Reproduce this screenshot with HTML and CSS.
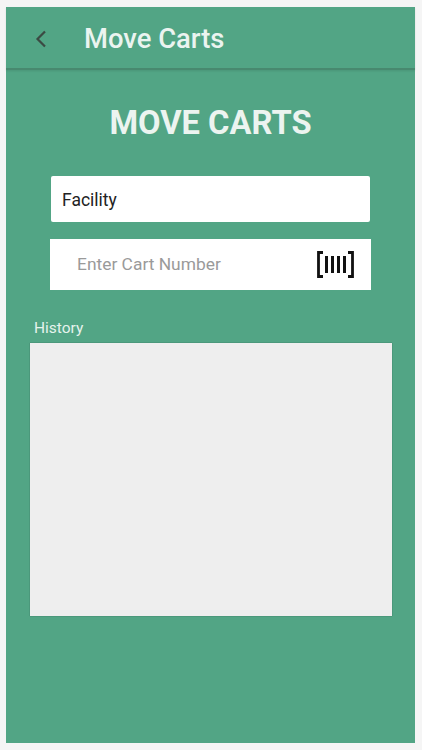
FILE: index.html
```html
<!DOCTYPE html>
<html lang="en">
<head>
    <meta charset="UTF-8">
    <meta name="viewport" content="width=device-width, initial-scale=1.0">
    <title>Move Carts</title>
    <link rel="stylesheet" href="styles.css">
</head>
<body>
    <div class="app">
        <!-- Top bar -->
        <div class="toolbar">
            <svg class="back-icon" width="12" height="18" viewBox="0 0 12 18">
                <path d="M10 1.5 L2.5 9 L10 16.5" fill="none" stroke="#3b4a43" stroke-width="2.2"/>
            </svg>
            <span class="toolbar-title">Move Carts</span>
        </div>

        <div class="content">
            <h1 class="page-title">MOVE CARTS</h1>

            <div class="facility-box">Facility</div>

            <div class="cart-box">
                <span class="cart-placeholder">Enter Cart Number</span>
                <!-- Barcode icon -->
                <svg class="barcode-icon" width="37" height="27" viewBox="0 0 37 27">
                    <path d="M6 1.5 H1.5 V25.5 H6 M31 1.5 H35.5 V25.5 H31" fill="none" stroke="#111" stroke-width="2.8"/>
                    <path d="M9.5 5 V22 M15.5 5 V22 M21.5 5 V22 M27.5 5 V22" fill="none" stroke="#111" stroke-width="3"/>
                </svg>
            </div>

            <div class="history-label">History</div>
            <div class="history-box"></div>
        </div>
    </div>
</body>
</html>
```

FILE: styles.css
```css
html, body {
    height: 100%;
}

body {
    margin: 0;
    padding: 7px 7px 7px 6px;
    box-sizing: border-box;
    background-color: #f5f5f5;
    font-family: Roboto, "Liberation Sans", sans-serif;
}

.app {
    height: 100%;
    background-color: #52a585;
    display: flex;
    flex-direction: column;
}

/* Top bar */
.toolbar {
    height: 63px;
    flex-shrink: 0;
    display: flex;
    align-items: center;
    padding: 2px 0 0 29px;
    box-sizing: border-box;
    border-bottom: 2px solid #48896f;
    box-shadow: 0 1px 2px rgba(0, 0, 0, 0.1);
}

.back-icon {
    margin-right: 37px;
}

.toolbar-title {
    font-size: 27.4px;
    font-weight: 500;
    color: #ebf4f0;
}

.content {
    flex: 1;
    display: flex;
    flex-direction: column;
}

.page-title {
    margin: 33px 0 0 0;
    text-align: center;
    font-size: 32.7px;
    line-height: 40px;
    font-weight: 700;
    color: #ecf4f0;
}

.facility-box {
    margin: 33px 45px 0 45px;
    height: 46px;
    padding: 1px 0 0 11px;
    box-sizing: border-box;
    display: flex;
    align-items: center;
    background-color: #fff;
    border-radius: 2px;
    font-size: 17.5px;
    color: #222;
}

.cart-box {
    margin: 17px 44px 0 44px;
    height: 51px;
    padding: 0 17px 0 27px;
    box-sizing: border-box;
    display: flex;
    align-items: center;
    justify-content: space-between;
    background-color: #fff;
}

.cart-placeholder {
    font-size: 17.4px;
    line-height: 20px;
    margin-bottom: 2px;
    color: #9a9a9a;
}

.history-label {
    margin: 29px 0 0 28px;
    font-size: 15.5px;
    line-height: 19px;
    color: #e6f3ed;
}

.history-box {
    margin: 5px 23px 0 24px;
    height: 273px;
    background-color: #eeeeee;
    box-shadow: 0 0 1px rgba(0, 0, 0, 0.45);
}
```
